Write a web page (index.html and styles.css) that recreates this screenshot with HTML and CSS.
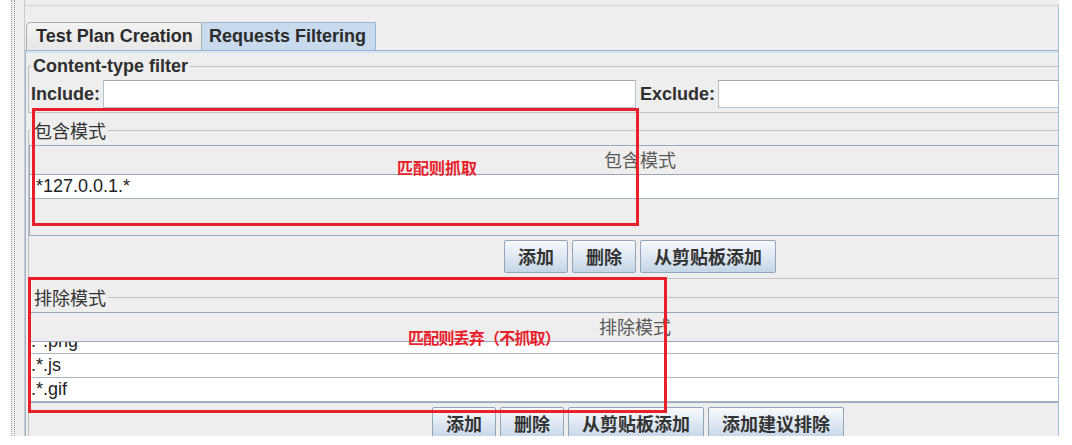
FILE: index.html
```html
<!DOCTYPE html>
<html lang="zh">
<head>
<meta charset="utf-8">
<title>Requests Filtering</title>
<link rel="stylesheet" href="styles.css">
</head>
<body>
<div class="screen">
  <div class="divider"></div>
  <div class="spacer"></div>
  <div class="panel">
    <div class="frame">
      <div class="tabs">
        <div class="tab tab-plan">Test Plan Creation</div>
        <div class="tab tab-req">Requests Filtering</div>
      </div>
      <div class="tabbody">
        <fieldset class="group group-ct">
          <legend class="legend-bold">Content-type filter</legend>
          <div class="field-row">
            <span class="lbl">Include:</span>
            <div class="input input-inc"></div>
            <span class="lbl">Exclude:</span>
            <div class="input input-exc"></div>
          </div>
        </fieldset>

        <fieldset class="group group-inc">
          <legend class="legend-cjk">包含模式</legend>
          <div class="pane">
            <div class="thead thead-inc">包含模式</div>
            <div class="viewport">
              <div class="row">.*127.0.0.1.*</div>
            </div>
          </div>
          <div class="btns btns-inc">
            <button class="btn">添加</button>
            <button class="btn">删除</button>
            <button class="btn">从剪贴板添加</button>
          </div>
        </fieldset>

        <fieldset class="group group-exc">
          <legend class="legend-cjk">排除模式</legend>
          <div class="pane">
            <div class="thead thead-exc">排除模式</div>
            <div class="viewport scrolled">
              <div class="row">.*.png</div>
              <div class="row">.*.js</div>
              <div class="row">.*.gif</div>
            </div>
          </div>
          <div class="btns btns-exc">
            <button class="btn">添加</button>
            <button class="btn">删除</button>
            <button class="btn">从剪贴板添加</button>
            <button class="btn">添加建议排除</button>
          </div>
        </fieldset>
      </div>
    </div>
  </div>
</div>

<div class="mark mark-inc"></div>
<div class="mark mark-exc"></div>
<div class="note note-inc">匹配则抓取</div>
<div class="note note-exc">匹配则丢弃（不抓取）</div>
</body>
</html>
```

FILE: styles.css
```css
* {
  box-sizing: border-box;
}

body {
  margin: 0;
  width: 1072px;
  height: 445px;
  overflow: hidden;
  position: relative;
  background: #ffffff;
  color: #333333;
  font-family: "Liberation Sans", "Noto Sans CJK SC", sans-serif;
}

.screen {
  display: flex;
  margin-left: 11px;
  width: 1048px;
  height: 436px;
  background: #eeeeee;
}

.divider {
  width: 4px;
  border-left: 1px dotted #9c9c9c;
  border-right: 1px dotted #9c9c9c;
}

.spacer {
  width: 9px;
}

.panel {
  flex: 1;
  display: flex;
  flex-direction: column;
  border-left: 1px solid #c9c9c9;
  overflow: hidden;
}

.frame {
  flex: 1;
  margin-top: 5px;
  display: flex;
  flex-direction: column;
  border-top: 1px solid #d3d3d3;
  border-right: 1px solid #a6bfdc;
  overflow: hidden;
}

/* Tabs */
.tabs {
  display: flex;
  height: 28px;
  margin: 16px 0 0 1px;
}

.tab {
  height: 28px;
  font-weight: bold;
  font-size: 18px;
  line-height: 26px;
  border: 1px solid;
  border-bottom: none;
  color: #2b2b2b;
  white-space: nowrap;
}

.tab-plan {
  width: 176px;
  padding-left: 9px;
  border-color: #ababab;
  border-top-left-radius: 5px;
  background: linear-gradient(#f3f3f3, #e7e7e7);
}

.tab-req {
  width: 174px;
  padding-left: 7px;
  border-color: #9cb5d4;
  border-left: none;
  border-top-left-radius: 2px;
  background: #c8dbee;
}

.tabbody {
  flex: 1;
  border-top: 1px solid #9db6d5;
  border-left: 1px solid #9db6d5;
  background: linear-gradient(#d6e4f2, #d6e4f2) 0 0 / 100% 2px no-repeat, #eeeeee;
  padding-left: 2px;
}

/* Titled groups */
.group {
  margin: 0 -40px 0 0;
  min-width: 0;
  border: 1px solid #c2c2c2;
}

.group-ct {
  margin-top: 5px;
  padding: 4px 2px 4px 2px;
}

.group-inc {
  margin-top: 7px;
  padding: 5px 2px 5px 1px;
}

.group-exc {
  margin-top: 8px;
  padding: 5px 2px 5px 1px;
}

.legend-bold {
  padding: 0 2px;
  font-weight: bold;
  font-size: 18px;
  line-height: 20px;
  color: #2f2f2f;
}

.legend-cjk {
  padding: 0 2px 0 4px;
  font-family: "Noto Sans CJK SC", sans-serif;
  font-size: 18px;
  line-height: 20px;
  color: #333333;
}

/* Content-type row */
.field-row {
  display: flex;
  align-items: center;
  height: 28px;
}

.lbl {
  font-weight: bold;
  font-size: 18px;
  margin-right: 3px;
  color: #2f2f2f;
  white-space: nowrap;
}

.input {
  height: 28px;
  background: #ffffff;
  border: 1px solid #b5c0cd;
  border-top-color: #a8a8a8;
}

.input-inc {
  width: 533px;
  margin-right: 4px;
}

.input-exc {
  flex: 1;
}

/* Tables */
.pane {
  margin-left: -1px;
  border: 1px solid #98a9bc;
  border-right: none;
}

.thead {
  height: 29px;
  border-bottom: 1px solid #98a9bc;
  font-family: "Noto Sans CJK SC", sans-serif;
  font-size: 18px;
  line-height: 27px;
  color: #5a5a5a;
  white-space: nowrap;
}

.thead-inc {
  padding-left: 574px;
}

.thead-exc {
  padding-left: 569px;
}

.viewport {
  height: 60px;
  overflow: hidden;
}

.row {
  height: 24px;
  background: #ffffff;
  border-bottom: 1px solid #a9b6c5;
  padding-left: 1px;
  font-size: 18px;
  line-height: 23px;
  color: #222222;
  white-space: nowrap;
}

.scrolled .row:first-child {
  margin-top: -12px;
}

/* Buttons */
.btns {
  display: flex;
  gap: 4px;
  margin-top: 4px;
}

.btns-inc {
  padding-left: 474px;
}

.btns-exc {
  padding-left: 402px;
}

.btn {
  height: 33px;
  margin: 0;
  padding: 0 13px;
  border: 1px solid #91a5bd;
  border-radius: 2px;
  background: linear-gradient(#f8fafc, #c4d5e7);
  font-family: "Noto Sans CJK SC", sans-serif;
  font-weight: bold;
  font-size: 18px;
  line-height: 31px;
  color: #333333;
  white-space: nowrap;
}

/* Annotations */
.mark {
  position: absolute;
  border: 3px solid #e8202a;
}

.mark-inc {
  left: 32px;
  top: 108px;
  width: 607px;
  height: 118px;
}

.mark-exc {
  left: 28px;
  top: 277px;
  width: 639px;
  height: 136px;
}

.note {
  position: absolute;
  color: #e8202a;
  font-family: "Noto Sans CJK SC", sans-serif;
  font-weight: bold;
  font-size: 16px;
  line-height: 16px;
  white-space: nowrap;
}

.note-inc {
  left: 397px;
  top: 159px;
}

.note-exc {
  left: 408px;
  top: 329px;
  letter-spacing: -0.8px;
}
```
